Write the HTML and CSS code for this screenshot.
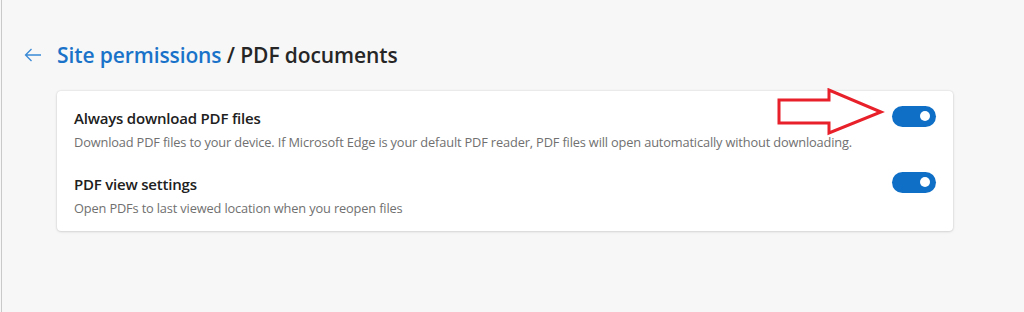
FILE: index.html
```html
<!DOCTYPE html>
<html>
	<head>
		<meta charset="utf-8" />
		<title>Site permissions / PDF documents</title>
		<link rel="stylesheet" href="styles.css">
	</head>
	<body>
		<div class="page">
			<div class="header">
				<span class="back">
					<svg width="18" height="14" viewBox="0 0 18 14">
						<path d="M17 7H1.5M7.5 1L1.5 7l6 6" fill="none" stroke="#3a8ad6" stroke-width="1.3"/>
					</svg>
				</span>
				<h1 class="title"><span class="crumb">Site permissions</span> / PDF documents</h1>
			</div>

			<div class="card">
				<div class="row">
					<div class="text">
						<div class="label">Always download PDF files</div>
						<div class="desc">Download PDF files to your device. If Microsoft Edge is your default PDF reader, PDF files will open automatically without downloading.</div>
					</div>
					<div class="toggle"><span class="knob"></span></div>
				</div>
				<div class="row">
					<div class="text">
						<div class="label">PDF view settings</div>
						<div class="desc">Open PDFs to last viewed location when you reopen files</div>
					</div>
					<div class="toggle"><span class="knob"></span></div>
				</div>

				<!-- red arrow drawn over the screenshot -->
				<svg class="mark" width="110" height="50" viewBox="0 0 110 50">
					<path d="M2 12H52V2L104 24L52 45V35H2Z" fill="none" stroke="#e8202a" stroke-width="3" stroke-linejoin="miter"/>
				</svg>
			</div>
		</div>
	</body>
</html>
```

FILE: styles.css
```css
html, body {
	margin: 0;
	padding: 0;
}

body {
	background: #f7f7f7;
	font-family: "Open Sans", "Noto Sans", sans-serif;
	color: #1b1b1b;
	height: 312px;
	overflow: hidden;
}

.page {
	border-left: 1px solid #c9c9c9;
	margin-left: 1px;
	height: 312px;
	box-sizing: border-box;
	padding: 41px 71px 0 55px;
}

.header {
	display: flex;
	align-items: center;
	margin-left: -33px;
	height: 28px;
}

.back {
	display: flex;
	width: 33px;
}

.title {
	margin: 0;
	font-size: 21px;
	font-weight: 600;
	letter-spacing: -0.1px;
	color: #262626;
}

.crumb {
	color: #1a73c9;
}

.card {
	position: relative;
	margin-top: 22px;
	width: 896px;
	height: 140px;
	box-sizing: border-box;
	background: #fff;
	border-radius: 4px;
	box-shadow: 0 0 2px rgba(0, 0, 0, 0.16), 0 1px 3px rgba(0, 0, 0, 0.1);
	padding: 8px 17px 0 17px;
}

.row {
	display: flex;
	align-items: center;
	justify-content: space-between;
	height: 60px;
	margin-bottom: 6px;
}

.label {
	font-size: 15px;
	font-weight: 600;
	letter-spacing: -0.2px;
	color: #202020;
	line-height: 22px;
}

.desc {
	font-size: 12.8px;
	letter-spacing: -0.15px;
	color: #707070;
	line-height: 20px;
	margin-top: 3px;
}

.toggle {
	display: flex;
	align-items: center;
	justify-content: flex-end;
	width: 44px;
	height: 21px;
	border-radius: 11px;
	background: #0f6fc6;
	padding-right: 6px;
	box-sizing: border-box;
	margin-top: -26px;
}

.knob {
	width: 10px;
	height: 10px;
	border-radius: 50%;
	background: #fff;
}

.mark {
	position: absolute;
	left: 720px;
	top: -3px;
}
```
